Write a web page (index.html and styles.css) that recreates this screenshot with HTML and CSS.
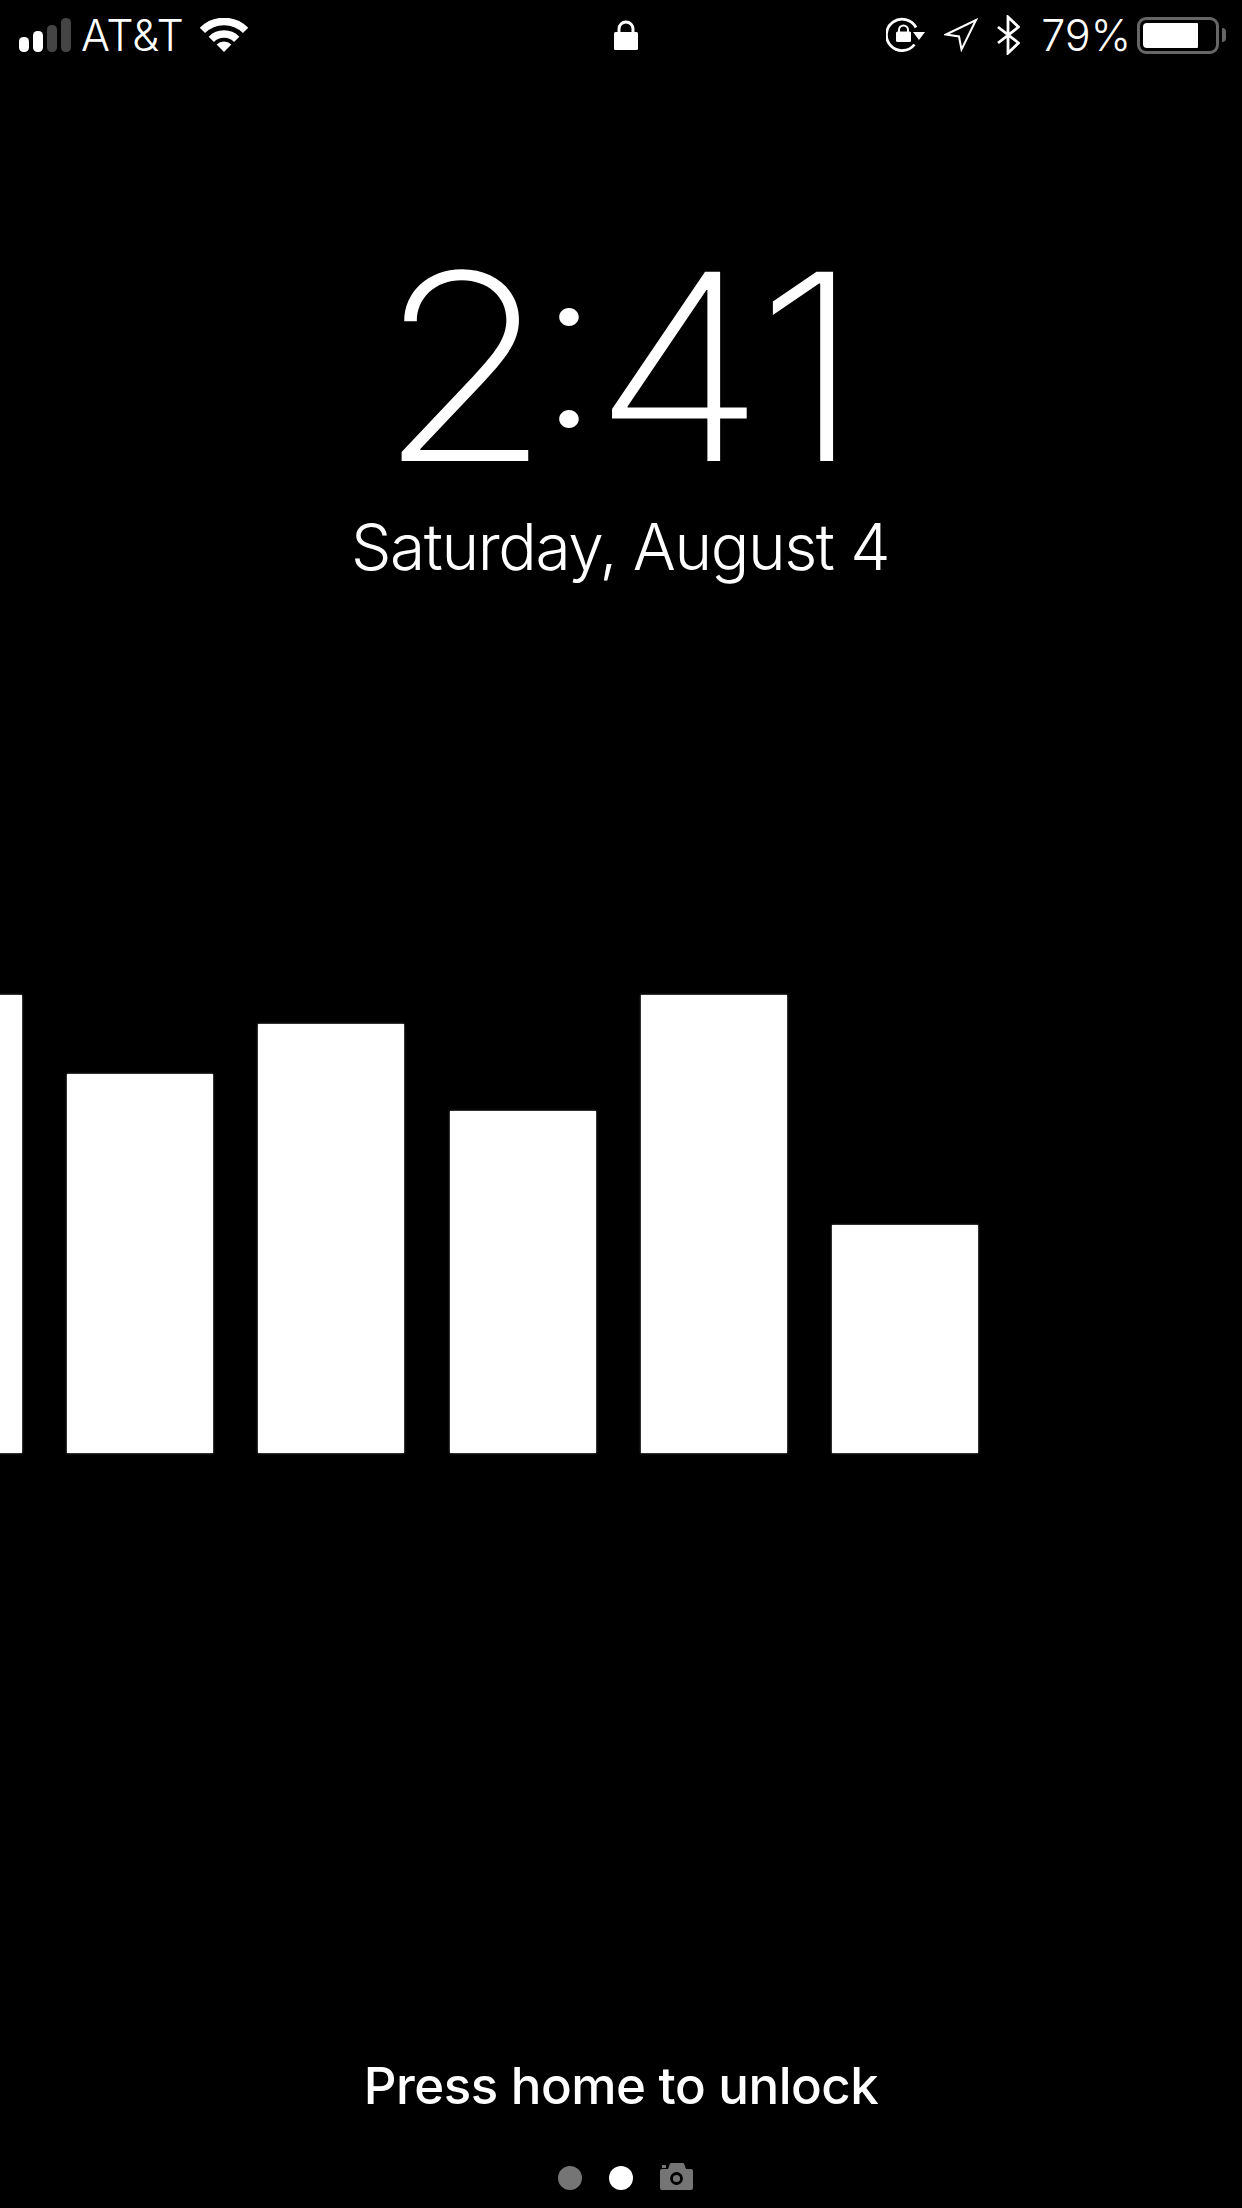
FILE: index.html
```html
<!DOCTYPE html>
<html>
<head>
  <link rel="stylesheet" href="styles.css">
</head>
<body>
  <div class="statusbar">
    <div class="status-left">
      <svg class="signal" width="52" height="34" viewBox="0 0 52 34">
        <rect x="0" y="19" width="10" height="15" rx="4.5" fill="#fff"/>
        <rect x="14" y="13" width="10" height="21" rx="4.5" fill="#fff"/>
        <rect x="28" y="7" width="10" height="27" rx="4.5" fill="#444"/>
        <rect x="42" y="0" width="10" height="34" rx="4.5" fill="#444"/>
      </svg>
      <span class="carrier">AT&amp;T</span>
      <svg class="wifi" width="48" height="34" viewBox="0 0 48 34">
        <path d="M2.4 12.4 A30.5 30.5 0 0 1 45.6 12.4" fill="none" stroke="#fff" stroke-width="7.5"/>
        <path d="M11.3 21.3 A18 18 0 0 1 36.7 21.3" fill="none" stroke="#fff" stroke-width="7.5"/>
        <path d="M24 34 L16.6 26.6 A10.5 10.5 0 0 1 31.4 26.6 Z" fill="#fff"/>
      </svg>
    </div>
    <svg class="padlock" width="24" height="30" viewBox="0 0 24 30">
      <path d="M5 13 V9 A7 7 0 0 1 19 9 V13" fill="none" stroke="#fff" stroke-width="3"/>
      <rect x="0" y="12" width="24" height="18" rx="1.5" fill="#fff"/>
    </svg>
    <div class="status-right">
      <svg class="rotation" width="39" height="36" viewBox="0 0 39 36">
        <path d="M28.5 27.5 A15.7 15.7 0 1 1 30 10.5" fill="none" stroke="#fff" stroke-width="2.8"/>
        <path d="M27 15 H39 L33 23 Z" fill="#fff"/>
        <path d="M13 15 V13 A4.5 4.5 0 0 1 22 13 V15" fill="none" stroke="#fff" stroke-width="2"/>
        <rect x="10" y="14.5" width="15" height="10.5" rx="1.5" fill="#fff"/>
      </svg>
      <svg class="location" width="34" height="34" viewBox="0 0 34 34">
        <path d="M2 16.5 L32 2 L17.5 31.5 L15 18.5 Z" fill="none" stroke="#fff" stroke-width="2"/>
      </svg>
      <svg class="bluetooth" width="23" height="40" viewBox="0 0 23 40">
        <path d="M1 12 L21.5 28 L11 38 V2 L21.5 12 L1 28" fill="none" stroke="#fff" stroke-width="2.8"/>
      </svg>
      <span class="percent">79%</span>
      <div class="battery">
        <div class="battery-shell"><div class="battery-fill"></div></div>
        <div class="battery-nub"></div>
      </div>
    </div>
  </div>

  <div class="clock">
    <div class="time">2<span class="colon">:</span><span class="four">4</span>1</div>
    <div class="date">Saturday, August 4</div>
  </div>

  <div class="chart">
    <div class="bar" style="height: 458px"></div>
    <div class="bar" style="height: 379px"></div>
    <div class="bar" style="height: 429px"></div>
    <div class="bar" style="height: 342px"></div>
    <div class="bar" style="height: 458px"></div>
    <div class="bar" style="height: 228px"></div>
  </div>

  <div class="footer">
    <div class="unlock">Press home to unlock</div>
    <div class="pages">
      <span class="dot"></span>
      <span class="dot dot-on"></span>
      <svg class="camera" width="33" height="27" viewBox="0 0 33 27">
        <rect x="2" y="2" width="4" height="3" fill="#757575"/>
        <path d="M8 6 L10 0.5 Q10.3 0 11 0 H23 Q23.700 0 24 0.5 L26 6 H31 Q33 6 33 8 V25 Q33 27 31 27 H2 Q0 27 0 25 V8 Q0 6 2 6 Z" fill="#757575"/>
        <circle cx="16.500" cy="15.500" r="5" fill="#757575" stroke="#000" stroke-width="2.800"/>
      </svg>
    </div>
  </div>
</body>
</html>
```

FILE: styles.css
```css
body {
  margin: 0;
  width: 1242px;
  height: 2208px;
  background: #000;
  color: #fff;
  font-family: Inter, "Liberation Sans", sans-serif;
  overflow: hidden;
  display: flex;
  flex-direction: column;
}

.statusbar {
  display: grid;
  grid-template-columns: 1fr auto 1fr;
  align-items: center;
  height: 70px;
  padding: 0 16px 0 19px;
  flex-shrink: 0;
}

.status-left {
  display: flex;
  align-items: center;
  height: 70px;
}

.status-right {
  display: flex;
  align-items: center;
  justify-content: flex-end;
  height: 70px;
}

.signal {
  margin-right: 10px;
}

.carrier {
  font-size: 43px;
  font-weight: 300;
  line-height: 70px;
  margin-right: 16px;
}

.padlock {
  margin-left: 7px;
}

.rotation {
  margin-right: 19px;
}

.location {
  margin-right: 19px;
}

.bluetooth {
  margin-right: 21px;
}

.percent {
  font-size: 43px;
  font-weight: 300;
  line-height: 70px;
  margin-right: 6px;
}

.battery {
  display: flex;
  align-items: center;
}

.battery-shell {
  width: 82px;
  height: 37px;
  box-sizing: border-box;
  border: 3px solid #666;
  border-radius: 9px;
  padding: 3px;
}

.battery-fill {
  width: 55px;
  height: 100%;
  background: #fff;
  border-radius: 4px 1px 1px 4px;
}

.battery-nub {
  width: 4px;
  height: 14px;
  margin-left: 3px;
  background: #666;
  border-radius: 0 4px 4px 0;
}

.clock {
  text-align: center;
  padding-top: 162px;
}

.time {
  font-size: 260px;
  font-weight: 200;
  line-height: 270px;
  letter-spacing: -16px;
  padding-right: 18px;
  transform: scaleX(1.09);
}

.colon {
  font-size: 229px;
  line-height: 0;
  vertical-align: 34px;
  letter-spacing: -10px;
}

.four {
  letter-spacing: -10px;
}

.date {
  font-size: 64px;
  font-weight: 350;
  line-height: 80px;
  letter-spacing: -1.4px;
  margin-top: 5px;
  padding-right: 2px;
}

.chart {
  display: flex;
  align-items: flex-end;
  gap: 45.25px;
  height: 458px;
  margin-left: -124.25px;
  margin-top: 408px;
}

.bar {
  width: 146px;
  flex-shrink: 0;
  background: #fff;
  box-shadow: 0 0 2px #999;
}

.footer {
  margin-top: auto;
  padding-bottom: 18px;
  display: flex;
  flex-direction: column;
  align-items: center;
}

.unlock {
  font-size: 51px;
  font-weight: 550;
  letter-spacing: -0.5px;
  line-height: 60px;
  margin-bottom: 47px;
}

.pages {
  display: flex;
  align-items: flex-end;
  gap: 27px;
  padding-left: 8px;
}

.dot {
  width: 24px;
  height: 24px;
  border-radius: 50%;
  background: #757575;
}

.dot-on {
  background: #fff;
}
```
